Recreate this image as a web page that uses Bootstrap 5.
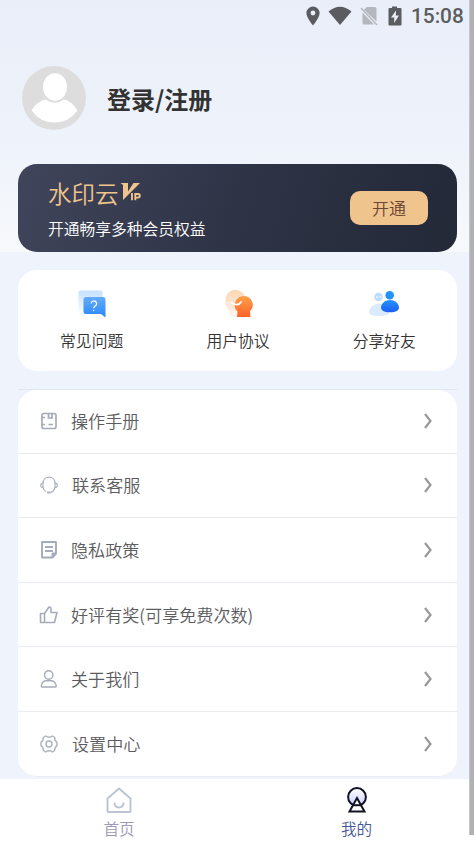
<!DOCTYPE html>
<html lang="zh-CN">
<head>
<meta charset="utf-8">
<meta name="viewport" content="width=device-width, initial-scale=1">
<title>我的</title>
<link href="https://cdn.jsdelivr.net/npm/bootstrap@5.3.0/dist/css/bootstrap.min.css" rel="stylesheet">
<style>
html,body{height:844px;overflow:hidden}
body{background:#eff3fc;font-family:"Noto Sans CJK SC",sans-serif;font-weight:350;color:#333}
svg{display:block;flex:none}
.hero{height:252px;background:linear-gradient(#e9eef8,#eff3fb 60%,#f7f9fb);padding:0 17px 0 18px}
.statusbar{height:32px;color:#5b5c60;margin-right:-5px}
.clock{font:500 20.8px/32px Roboto,sans-serif;width:51px;white-space:nowrap}
.profile{height:131.5px;padding-left:4px}
.login{font-size:24px;line-height:36px;font-weight:700;margin:2px 0 0 21px;color:#333}
.vip{height:88.5px;border-radius:19px;background:linear-gradient(105deg,#40455b,#2e3346 50%,#242938);padding:0 29px 0 30px}
.vip-title{font-size:23.5px;line-height:30px;color:#efc48d;margin-top:3px}
.vip-sub{font-size:15.75px;line-height:24px;color:#fff;margin-top:9px}
.open-btn{width:78px;height:34px;border-radius:10px;background:#efc48d;color:#6b4636;font-size:17px;font-weight:350;line-height:34px;padding:0;border:0}
.content{height:527px;padding:18px 17px 0 18px;overflow:hidden}
.tile-card{height:101px;border-radius:19px;border:0}
.tile{padding:19px 0 0 1px;font-size:15.8px;line-height:24px}
.tile span{margin-top:10px}
.menu-wrap{margin-top:18px;border-top:1px solid #e3e7f0}
.menu{border-radius:19px;height:387px;--bs-list-group-border-width:0;background:#fff}
.menu .list-group-item{height:64.6px;padding:0 24px 0 20px;font-size:17.1px;line-height:26px;color:#5c5c5e;background:transparent;border-bottom:1px solid #eaecf2}
.menu .list-group-item:first-child{height:63.6px}
.menu .list-group-item svg:first-child{margin-right:11px}
.menu .list-group-item:nth-child(4n+2) span{padding-left:1px}
.tabs{height:65px;background:#fff;padding-top:8px;font-size:15.6px;line-height:22px}
.tab-home{color:#9d98b5;padding-left:1px}
.tab-me{color:#445896;padding-left:2px}
.tabs span{margin-top:3px}
.scroll-thumb{width:5px;height:835px;background:#b1b1b5;border-left:1px solid #c5c6cc;z-index:5}
</style>
<script src="https://cdn.jsdelivr.net/npm/bootstrap@5.3.0/dist/js/bootstrap.bundle.min.js"></script>
</head>
<body>
<header class="hero">
  <div class="statusbar d-flex align-items-center justify-content-end">
    <svg width="14" height="20" viewBox="0 0 14 20"><path fill="currentColor" fill-rule="evenodd" d="M7 .5A6.600 6.600 0 0 0 .4 7.100C.4 12 7 19.500 7 19.500S13.600 12 13.600 7.100A6.600 6.600 0 0 0 7 .5ZM7 4.600a2.400 2.400 0 1 1 0 4.800 2.400 2.400 0 0 1 0-4.800Z"/></svg>
    <svg class="ms-2" width="24" height="20" viewBox="1 0 24 20"><path fill="currentColor" d="M1.500 5.400Q13-4 24.500 5.400L13 19Z"/></svg>
    <svg class="ms-2" width="19" height="20" viewBox="1 0 19 20"><path fill="#b4b7be" d="M8 1h8q1.500 0 1.500 1.500V15.500L5 3.800ZM3.500 6.500 15 18.500H5q-1.500 0-1.500-1.500Z"/><path d="m2 2 16 17" stroke="#b4b7be" stroke-width="1.600"/></svg>
    <svg class="mx-2" width="16" height="20" viewBox="0 0 16 20"><path fill="currentColor" d="M5 .5h5V2h3.500q1 0 1 1v15.500q0 1-1 1h-11q-1 0-1-1V3q0-1 1-1H5Z"/><path fill="#e9eef8" d="M9 4.500 4 11.500h3.200V17l4.800-7.500H8.800Z"/></svg>
    <span class="clock">15:08</span>
  </div>
  <div class="profile d-flex align-items-center">
    <svg width="64" height="64" viewBox="0 0 64 64"><circle cx="32" cy="32" r="32" fill="#ddd"/><ellipse cx="33" cy="21" rx="12" ry="13.800" fill="#fff"/><path fill="#fff" d="M9.500 44.500Q15 35 23.500 33.500Q33 40 42 33.500Q50 35 55.500 44.500Q47 56.500 32.500 56.500Q18 56.500 9.500 44.500Z"/></svg>
    <div class="login">登录/注册</div>
  </div>
  <section class="vip d-flex align-items-center justify-content-between">
    <div>
      <div class="vip-title d-flex">水印云
        <svg class="mt-1" width="23" height="21" viewBox="0 0 23 21"><path fill="#efc48d" d="M1.500 1h7.500v8.500L14.500 1h6.500L4 18V3Z"/><path fill="none" stroke="#efc48d" stroke-width="1.900" d="M13 11v7.300M16.300 18.300V12h2.700a1.800 1.800 0 0 1 0 3.600h-2.700"/></svg>
      </div>
      <div class="vip-sub">开通畅享多种会员权益</div>
    </div>
    <button class="btn open-btn">开通</button>
  </section>
</header>
<main class="content">
  <section class="card tile-card">
    <div class="row g-0 text-center">
      <div class="tile col d-flex flex-column align-items-center">
        <svg width="30" height="30" viewBox="0 0 30 30"><defs><linearGradient id="pale" x2="0" y2="1"><stop stop-color="#c6e1ff"/><stop offset="1" stop-color="#f7fbff"/></linearGradient><linearGradient id="sky" x2="0" y2="1"><stop stop-color="#65abfb"/><stop offset="1" stop-color="#2888fa"/></linearGradient></defs><path fill="url(#pale)" d="M3 1.500h20.500a2 2 0 0 1 2 2V18L1.500 23.500V3a1.500 1.500 0 0 1 1.500-1.500Z"/><path fill="url(#sky)" d="M8.500 8h17.500a2.500 2.500 0 0 1 2.500 2.500V28.500L24 25H9A2.500 2.500 0 0 1 6.500 22.500v-12A2.500 2.500 0 0 1 8.500 8Z"/><path d="M14.200 14.500a2.700 2.700 0 1 1 4 2.500q-1.500.8-1.500 2.300" fill="none" stroke="#fff" stroke-width="1.300"/><circle cx="16.600" cy="21.500" r=".8" fill="#fff"/></svg>
        <span>常见问题</span>
      </div>
      <div class="tile col d-flex flex-column align-items-center">
        <svg width="30" height="30" viewBox="0 0 30 30"><defs><linearGradient id="peach" x2="0" y2="1"><stop stop-color="#fbd5b1"/><stop offset="1" stop-color="#fff8f4"/></linearGradient><linearGradient id="orange" x2="0" y2="1"><stop stop-color="#ffa14d"/><stop offset="1" stop-color="#ff6226"/></linearGradient></defs><path fill="url(#peach)" d="M12.500 1a10 10 0 0 1 10 12v10l-2 5H5.500l.5-6q-3.500-4-3.500-10A10 10 0 0 1 12.500 1Z"/><path fill="url(#orange)" d="M20.500 7a9 9 0 0 1 6.500 15.500l.5 5.500H14l.5-5.500A9 9 0 0 1 20.500 7Z"/><path d="M8 13.500q7 4.500 10-.5" fill="none" stroke="#fff" stroke-width="1.800" stroke-linecap="round"/></svg>
        <span>用户协议</span>
      </div>
      <div class="tile col d-flex flex-column align-items-center">
        <svg width="30" height="30" viewBox="0 0 30 30"><defs><linearGradient id="blue" x2="0" y2="1"><stop stop-color="#2494ff"/><stop offset="1" stop-color="#1c5cf5"/></linearGradient></defs><circle cx="9.500" cy="8" r="4.300" fill="#bedcfb"/><path d="M7 8h2M10.500 8h2" stroke="#fff"/><path fill="#d9ebfd" d="M10 14.500c6 0 10 5.500 10 8.500s-4 4-10 4-10-1-10-4 4-8.500 10-8.500Z"/><circle cx="20.700" cy="6.300" r="4.300" fill="#2092f9"/><path fill="url(#blue)" d="M21 11c6 0 9 4.500 9 7.500s-3 4.800-9 4.800-9-1.800-9-4.800 3-7.500 9-7.500Z"/></svg>
        <span>分享好友</span>
      </div>
    </div>
  </section>
  <div class="menu-wrap">
    <div class="menu list-group">
      <a class="list-group-item d-flex align-items-center"><svg width="22" height="22" viewBox="0 0 22 22" fill="none" stroke="#a6abbb" stroke-width="1.700"><rect x="4" y="3.500" width="14" height="15" rx="1.700"/><path d="M10.500 3.500V8h3.500V3.500M3 7.500h4M3 14.500h4M10.500 14.500h4.500"/></svg><span>操作手册</span><svg class="ms-auto" width="10" height="18" viewBox="0 0 10 18"><path d="M2 2 7.500 9 2 16" fill="none" stroke="#999" stroke-width="2.200"/></svg></a>
      <a class="list-group-item d-flex align-items-center"><svg width="22" height="22" viewBox="0 0 22 22" fill="none" stroke="#adb2c2" stroke-width="1.200"><path d="M5 9.500C5 1 17 1 17 9.500M17 13.500q-1 4-4.500 5M5 13.500q1 3 3 4"/><path d="M5 9v4.500q-2.300 0-2.300-2.200T5 9ZM17 9v4.500q2.300 0 2.300-2.200T17 9Z"/><path stroke-width="2" d="M9 18.500h3.500"/></svg><span>联系客服</span><svg class="ms-auto" width="10" height="18" viewBox="0 0 10 18"><path d="M2 2 7.500 9 2 16" fill="none" stroke="#999" stroke-width="2.200"/></svg></a>
      <a class="list-group-item d-flex align-items-center"><svg width="22" height="22" viewBox="0 0 22 22" fill="none" stroke="#a6abbb" stroke-width="1.900" stroke-linejoin="round"><path d="M4 3h14v11.500L14.500 18.500H4ZM18 14.500h-3.500v4M7 8h8M7 12h8"/></svg><span>隐私政策</span><svg class="ms-auto" width="10" height="18" viewBox="0 0 10 18"><path d="M2 2 7.500 9 2 16" fill="none" stroke="#999" stroke-width="2.200"/></svg></a>
      <a class="list-group-item d-flex align-items-center"><svg width="22" height="22" viewBox="0 0 22 22" fill="none" stroke="#a6abbb" stroke-width="1.600" stroke-linejoin="round"><path d="M2.500 9.500h4v9h-4ZM6.500 9.500 11 3q2 0 2 2v3.500h6l-2.500 10h-10"/></svg><span>好评有奖(可享免费次数)</span><svg class="ms-auto" width="10" height="18" viewBox="0 0 10 18"><path d="M2 2 7.500 9 2 16" fill="none" stroke="#999" stroke-width="2.200"/></svg></a>
      <a class="list-group-item d-flex align-items-center"><svg width="22" height="22" viewBox="0 0 22 22" fill="none" stroke="#a6abbb" stroke-width="1.400"><circle cx="10.700" cy="7" r="4.200"/><path d="M7.500 12.700h6.500q3.500.8 4.300 5.300 0 1-1 1h-13q-1 0-1-1 .7-4.500 4.200-5.300Z"/></svg><span>关于我们</span><svg class="ms-auto" width="10" height="18" viewBox="0 0 10 18"><path d="M2 2 7.500 9 2 16" fill="none" stroke="#999" stroke-width="2.200"/></svg></a>
      <a class="list-group-item d-flex align-items-center"><svg width="22" height="22" viewBox="0 0 22 22" fill="none" stroke="#adb2c2" stroke-width="1.400" stroke-linejoin="round"><circle cx="11" cy="11" r="3"/><path d="M7.500 3q3.500 2.500 7 0l2.200 1.500q-.2 3.500 2.300 4.700v3.600q-2.500 1.200-2.300 4.700L14.500 19q-3.500-2.500-7 0l-2.200-1.500q.2-3.500-2.300-4.700V9.200q2.500-1.200 2.300-4.700Z"/></svg><span>设置中心</span><svg class="ms-auto" width="10" height="18" viewBox="0 0 10 18"><path d="M2 2 7.500 9 2 16" fill="none" stroke="#999" stroke-width="2.200"/></svg></a>
    </div>
  </div>
</main>
<nav class="tabs row g-0 text-center">
  <a class="tab-home col-6 d-flex flex-column align-items-center text-decoration-none"><svg width="26" height="27" viewBox="0 0 26 27" fill="none" stroke="#bac4d5" stroke-width="1.900" stroke-linejoin="round"><path d="M13 1.500 24.500 11.500V24q0 1-1 1h-21q-1 0-1-1V11.500Z"/><path d="M8.500 15.500q0 5 4.500 5t4.500-5"/></svg><span>首页</span></a>
  <a class="tab-me col-6 d-flex flex-column align-items-center text-decoration-none"><svg width="26" height="27" viewBox="0 0 26 27"><defs><linearGradient id="wheel" x2="0" y2="1"><stop stop-color="#fff"/><stop offset="1" stop-color="#c9d1fb"/></linearGradient></defs><circle cx="13" cy="10" r="8.900" fill="url(#wheel)" stroke="#111224" stroke-width="2"/><path fill="#fff" stroke="#111224" stroke-width="2" d="m13 11 7.500 13.500h-15Z"/><path d="M9 18.200h8" stroke="#111224" stroke-width="2"/></svg><span>我的</span></a>
</nav>
<div class="scroll-thumb position-absolute top-0 end-0"></div>
</body>
</html>
